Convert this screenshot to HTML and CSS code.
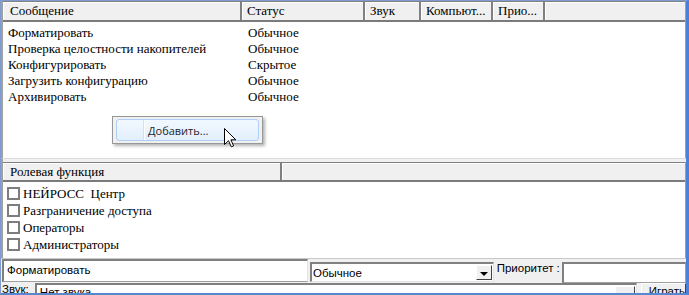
FILE: index.html
```html
<!DOCTYPE html>
<html lang="ru">
<head>
<meta charset="UTF-8">
<title>События</title>
<link rel="stylesheet" href="styles.css">
</head>
<body>
<div class="window">
    <!-- список сообщений -->
    <div class="pane pane-top">
        <div class="header cols-msg">
            <div class="hcell">Сообщение</div>
            <div class="hcell">Статус</div>
            <div class="hcell">Звук</div>
            <div class="hcell">Компьют...</div>
            <div class="hcell">Прио...</div>
            <div class="hcell hcell-last"></div>
        </div>
        <div class="rows">
            <div class="row cols-msg"><span class="cell first">Форматировать</span><span class="cell">Обычное</span></div>
            <div class="row cols-msg"><span class="cell first">Проверка целостности накопителей</span><span class="cell">Обычное</span></div>
            <div class="row cols-msg"><span class="cell first">Конфигурировать</span><span class="cell">Скрытое</span></div>
            <div class="row cols-msg"><span class="cell first">Загрузить конфигурацию</span><span class="cell">Обычное</span></div>
            <div class="row cols-msg"><span class="cell first">Архивировать</span><span class="cell">Обычное</span></div>
        </div>
    </div>

    <div class="splitter"></div>

    <!-- ролевые функции -->
    <div class="pane pane-roles">
        <div class="header cols-roles">
            <div class="hcell">Ролевая функция</div>
            <div class="hcell hcell-last"></div>
        </div>
        <div class="checks">
            <div class="check"><span class="box"></span>НЕЙРОСС&nbsp; Центр</div>
            <div class="check"><span class="box"></span>Разграничение доступа</div>
            <div class="check"><span class="box"></span>Операторы</div>
            <div class="check"><span class="box"></span>Администраторы</div>
        </div>
    </div>

    <!-- свойства сообщения -->
    <div class="form-row">
        <div class="field field-name">Форматировать</div>
        <div class="combo combo-status">
            <span class="combo-text">Обычное</span>
            <span class="drop"><span class="arrow"></span></span>
        </div>
        <div class="label">Приоритет :</div>
        <div class="field field-prio"></div>
    </div>
    <div class="sound-row">
        <div class="label label-sound">Звук:</div>
        <div class="combo combo-sound">
            <span class="combo-text">Нет звука</span>
            <span class="drop"><span class="arrow"></span></span>
        </div>
        <div class="btn">Играть</div>
    </div>
</div>

<!-- контекстное меню -->
<div class="menu">
    <div class="menu-item">
        <span class="menu-icon"></span>
        <span class="menu-text">Добавить...</span>
    </div>
</div>
<svg class="cursor" width="13" height="20" viewBox="0 0 13 20">
    <path d="M0.5 0.5 L0.5 16.5 L4.5 12.7 L7.3 18.8 L9.6 17.8 L6.9 11.8 L11.8 11.8 Z" fill="#fff" stroke="#000" stroke-width="1" stroke-linejoin="miter"/>
</svg>
</body>
</html>
```

FILE: styles.css
```css
* {
    box-sizing: border-box;
}
html, body {
    margin: 0;
    padding: 0;
}
body {
    position: relative;
    width: 689px;
    height: 295px;
    overflow: hidden;
    background: #f0f0f0;
    font-family: "Liberation Serif", "DejaVu Serif", serif;
    font-size: 13px;
    color: #000;
}
.window {
    height: 295px;
    border: 1px solid #7f9ccf;
    border-right: 3px solid #4d7fd8;
    border-bottom: 2px solid #5a86d0;
    display: flex;
    flex-direction: column;
    overflow: hidden;
}
.window > div {
    flex-shrink: 0;
}
.pane {
    background: #fff;
    border-left: 2px solid #a0a0a0;
    border-right: 1px solid #a0a0a0;
}
.pane-top {
    height: 157px;
}
.pane-roles {
    height: 96px;
}
/* шапки таблиц */
.header {
    display: grid;
    height: 21px;
    background: #f0f0f0;
    border-top: 1px solid #808080;
    border-bottom: 2px solid #7a7a7a;
    box-shadow: inset 0 1px 0 #fff;
}
.pane-roles .header {
    height: 20px;
}
.cols-msg {
    grid-template-columns: 239px 123px 56px 72px 52px 1fr;
}
.cols-roles {
    grid-template-columns: 279px 1fr;
}
.hcell {
    padding-left: 5px;
    line-height: 18px;
    border-right: 2px solid #808080;
    box-shadow: inset 1px 0 0 #fff;
    white-space: nowrap;
    overflow: hidden;
}
.hcell:first-child {
    padding-left: 7px;
}
.hcell-last {
    border-right: none;
}
.rows {
    padding-top: 3px;
}
.row {
    display: grid;
    height: 16px;
    line-height: 16px;
}
.cell {
    padding-left: 6px;
    white-space: nowrap;
}
.cell.first {
    padding-left: 5px;
}
.splitter {
    height: 4px;
    background: #f0f0f0;
    border-top: 1px solid #dcdcdc;
    border-left: 2px solid #a0a0a0;
}
/* флажки */
.checks {
    padding-top: 3px;
}
.check {
    display: flex;
    align-items: center;
    height: 17px;
    padding-left: 4px;
}
.box {
    width: 13px;
    height: 13px;
    border: 2px solid #7d7d7d;
    background: #fff;
    margin-right: 3px;
}
/* нижняя форма */
.form-row {
    display: flex;
    height: 24px;
    border-top: 1px solid #c8c8c8;
    font-family: "Liberation Sans", Arial, sans-serif;
    font-size: 11.5px;
}
.field {
    background: #fff;
    border: 1px solid #a0a0a0;
    border-top: 2px solid #808080;
    border-left: 2px solid #808080;
    line-height: 19px;
    padding-left: 3px;
}
.field-name {
    width: 308px;
    margin-left: 1px;
    border-right-color: #e3e3e3;
}
.combo {
    position: relative;
    display: flex;
    align-items: center;
    background: #fff;
    border-top: 2px solid #808080;
    border-left: 2px solid #808080;
    border-right: 1px solid #e3e3e3;
    border-bottom: 1px solid #e3e3e3;
}
.combo-status {
    width: 185px;
    height: 20px;
    margin: 3px 0 0 2px;
}
.combo-text {
    padding-left: 1px;
}
.drop {
    position: absolute;
    right: 1px;
    top: 1px;
    width: 16px;
    height: 15px;
    background: #f0f0f0;
    border-top: 1px solid #fff;
    border-left: 1px solid #fff;
    border-right: 1px solid #404040;
    border-bottom: 1px solid #404040;
    display: flex;
    align-items: center;
    justify-content: center;
}
.arrow {
    width: 0;
    height: 0;
    border-left: 4px solid transparent;
    border-right: 4px solid transparent;
    border-top: 4px solid #000;
    margin-top: 2px;
}
.label {
    padding: 3px 2px 0 3px;
    white-space: nowrap;
}
.field-prio {
    width: 125px;
    height: 21px;
    margin-top: 3px;
}
.sound-row {
    display: flex;
    height: 20px;
    font-family: "Liberation Sans", Arial, sans-serif;
    font-size: 11.5px;
}
.label-sound {
    width: 34px;
    padding: 1px 0 0 1px;
}
.combo-sound {
    width: 605px;
    height: 20px;
    margin-top: 1px;
    align-items: flex-start;
}
.combo-sound .combo-text {
    padding: 1px 0 0 3px;
}
.combo-sound .drop {
    width: 20px;
}
.btn {
    margin: 1px 0 0 4px;
    flex: 1;
    background: #f0f0f0;
    border-top: 1px solid #fff;
    border-left: 1px solid #fff;
    border-right: 1px solid #404040;
    padding: 1px 0 0 7px;
}
/* контекстное меню */
.menu {
    position: absolute;
    left: 112px;
    top: 116px;
    width: 151px;
    height: 28px;
    padding: 2px 3px;
    background: #f0f0f0;
    border: 1px solid #979797;
    box-shadow: 2px 2px 3px rgba(0, 0, 0, 0.3);
    font-family: "Open Sans", "Liberation Sans", sans-serif;
    font-size: 11px;
}
.menu-item {
    display: flex;
    align-items: center;
    height: 22px;
    border: 1px solid #aecff7;
    border-radius: 3px;
    background: linear-gradient(#f2f8ff, #e3effd);
}
.menu-icon {
    width: 27px;
    height: 20px;
    border-right: 1px solid #d5e1ee;
    box-shadow: 1px 0 0 #fff;
}
.menu-text {
    padding-left: 4px;
    color: #1e1e1e;
}
.cursor {
    position: absolute;
    left: 224px;
    top: 128px;
}
```
